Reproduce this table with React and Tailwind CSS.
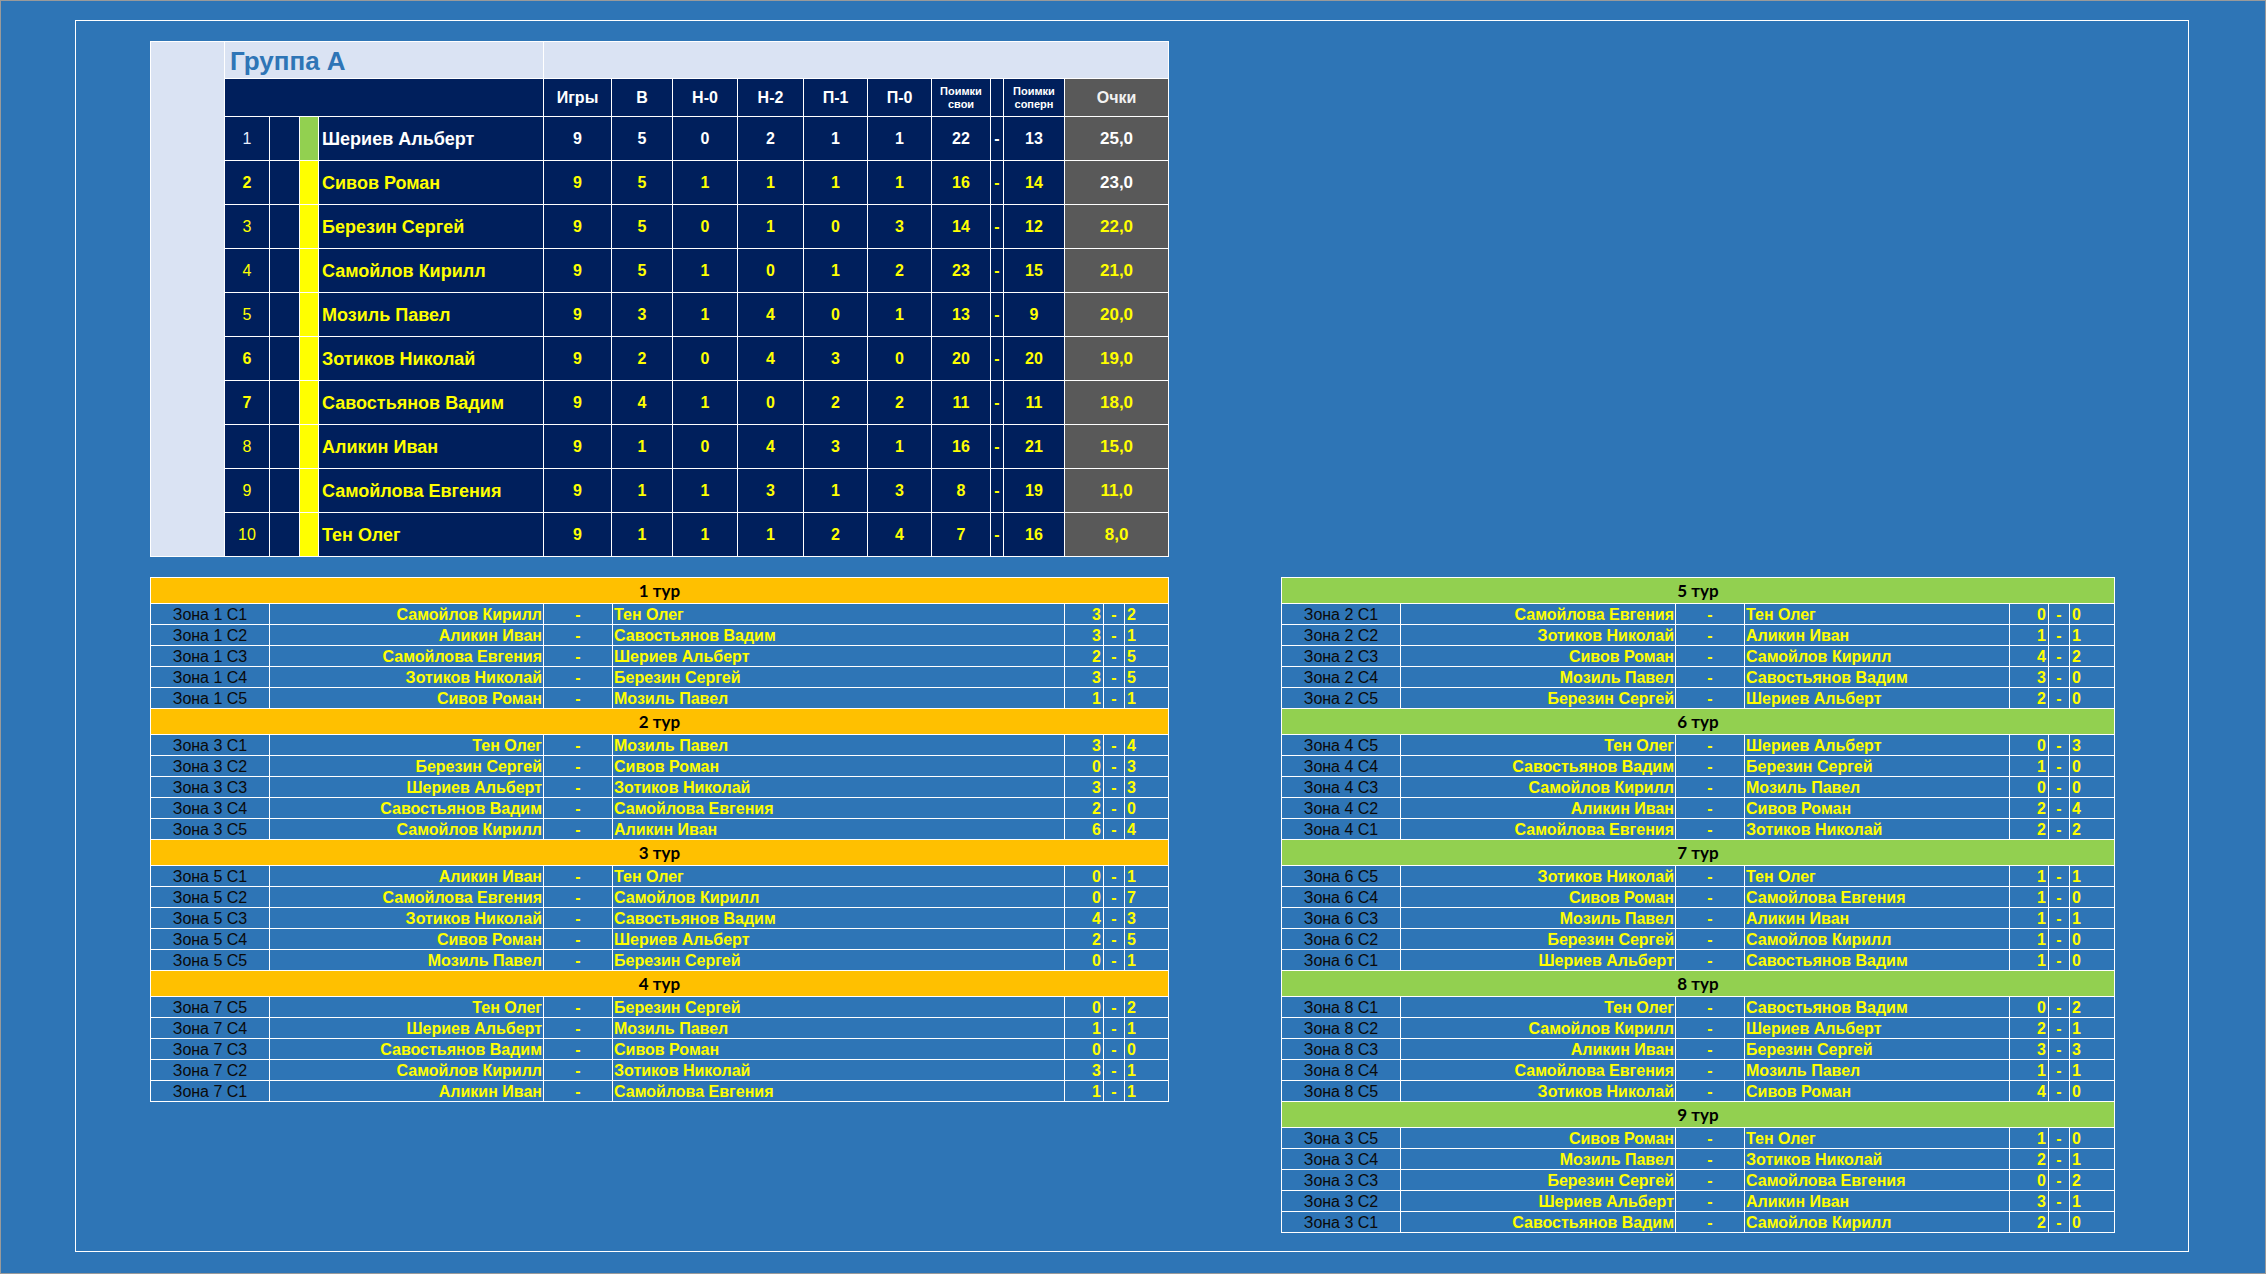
import React from "react";

const groupRows = [
  ["1", "Шериев Альберт", "9", "5", "0", "2", "1", "1", "22", "13", "25,0"],
  ["2", "Сивов Роман", "9", "5", "1", "1", "1", "1", "16", "14", "23,0"],
  ["3", "Березин Сергей", "9", "5", "0", "1", "0", "3", "14", "12", "22,0"],
  ["4", "Самойлов Кирилл", "9", "5", "1", "0", "1", "2", "23", "15", "21,0"],
  ["5", "Мозиль Павел", "9", "3", "1", "4", "0", "1", "13", "9", "20,0"],
  ["6", "Зотиков Николай", "9", "2", "0", "4", "3", "0", "20", "20", "19,0"],
  ["7", "Савостьянов Вадим", "9", "4", "1", "0", "2", "2", "11", "11", "18,0"],
  ["8", "Аликин Иван", "9", "1", "0", "4", "3", "1", "16", "21", "15,0"],
  ["9", "Самойлова Евгения", "9", "1", "1", "3", "1", "3", "8", "19", "11,0"],
  ["10", "Тен Олег", "9", "1", "1", "1", "2", "4", "7", "16", "8,0"],
];

const leftTours = [
  {
    title: "1 тур",
    rows: [
      ["Зона 1 С1", "Самойлов Кирилл", "Тен Олег", "3", "2"],
      ["Зона 1 С2", "Аликин Иван", "Савостьянов Вадим", "3", "1"],
      ["Зона 1 С3", "Самойлова Евгения", "Шериев Альберт", "2", "5"],
      ["Зона 1 С4", "Зотиков Николай", "Березин Сергей", "3", "5"],
      ["Зона 1 С5", "Сивов Роман", "Мозиль Павел", "1", "1"],
    ],
  },
  {
    title: "2 тур",
    rows: [
      ["Зона 3 С1", "Тен Олег", "Мозиль Павел", "3", "4"],
      ["Зона 3 С2", "Березин Сергей", "Сивов Роман", "0", "3"],
      ["Зона 3 С3", "Шериев Альберт", "Зотиков Николай", "3", "3"],
      ["Зона 3 С4", "Савостьянов Вадим", "Самойлова Евгения", "2", "0"],
      ["Зона 3 С5", "Самойлов Кирилл", "Аликин Иван", "6", "4"],
    ],
  },
  {
    title: "3 тур",
    rows: [
      ["Зона 5 С1", "Аликин Иван", "Тен Олег", "0", "1"],
      ["Зона 5 С2", "Самойлова Евгения", "Самойлов Кирилл", "0", "7"],
      ["Зона 5 С3", "Зотиков Николай", "Савостьянов Вадим", "4", "3"],
      ["Зона 5 С4", "Сивов Роман", "Шериев Альберт", "2", "5"],
      ["Зона 5 С5", "Мозиль Павел", "Березин Сергей", "0", "1"],
    ],
  },
  {
    title: "4 тур",
    rows: [
      ["Зона 7 С5", "Тен Олег", "Березин Сергей", "0", "2"],
      ["Зона 7 С4", "Шериев Альберт", "Мозиль Павел", "1", "1"],
      ["Зона 7 С3", "Савостьянов Вадим", "Сивов Роман", "0", "0"],
      ["Зона 7 С2", "Самойлов Кирилл", "Зотиков Николай", "3", "1"],
      ["Зона 7 С1", "Аликин Иван", "Самойлова Евгения", "1", "1"],
    ],
  },
];

const rightTours = [
  {
    title: "5 тур",
    rows: [
      ["Зона 2 С1", "Самойлова Евгения", "Тен Олег", "0", "0"],
      ["Зона 2 С2", "Зотиков Николай", "Аликин Иван", "1", "1"],
      ["Зона 2 С3", "Сивов Роман", "Самойлов Кирилл", "4", "2"],
      ["Зона 2 С4", "Мозиль Павел", "Савостьянов Вадим", "3", "0"],
      ["Зона 2 С5", "Березин Сергей", "Шериев Альберт", "2", "0"],
    ],
  },
  {
    title: "6 тур",
    rows: [
      ["Зона 4 С5", "Тен Олег", "Шериев Альберт", "0", "3"],
      ["Зона 4 С4", "Савостьянов Вадим", "Березин Сергей", "1", "0"],
      ["Зона 4 С3", "Самойлов Кирилл", "Мозиль Павел", "0", "0"],
      ["Зона 4 С2", "Аликин Иван", "Сивов Роман", "2", "4"],
      ["Зона 4 С1", "Самойлова Евгения", "Зотиков Николай", "2", "2"],
    ],
  },
  {
    title: "7 тур",
    rows: [
      ["Зона 6 С5", "Зотиков Николай", "Тен Олег", "1", "1"],
      ["Зона 6 С4", "Сивов Роман", "Самойлова Евгения", "1", "0"],
      ["Зона 6 С3", "Мозиль Павел", "Аликин Иван", "1", "1"],
      ["Зона 6 С2", "Березин Сергей", "Самойлов Кирилл", "1", "0"],
      ["Зона 6 С1", "Шериев Альберт", "Савостьянов Вадим", "1", "0"],
    ],
  },
  {
    title: "8 тур",
    rows: [
      ["Зона 8 С1", "Тен Олег", "Савостьянов Вадим", "0", "2"],
      ["Зона 8 С2", "Самойлов Кирилл", "Шериев Альберт", "2", "1"],
      ["Зона 8 С3", "Аликин Иван", "Березин Сергей", "3", "3"],
      ["Зона 8 С4", "Самойлова Евгения", "Мозиль Павел", "1", "1"],
      ["Зона 8 С5", "Зотиков Николай", "Сивов Роман", "4", "0"],
    ],
  },
  {
    title: "9 тур",
    rows: [
      ["Зона 3 С5", "Сивов Роман", "Тен Олег", "1", "0"],
      ["Зона 3 С4", "Мозиль Павел", "Зотиков Николай", "2", "1"],
      ["Зона 3 С3", "Березин Сергей", "Самойлова Евгения", "0", "2"],
      ["Зона 3 С2", "Шериев Альберт", "Аликин Иван", "3", "1"],
      ["Зона 3 С1", "Савостьянов Вадим", "Самойлов Кирилл", "2", "0"],
    ],
  },
];

function GroupTable() {
  const hd = "border border-white text-center align-middle font-bold text-[16px] text-white";
  return (
    <table className="table-fixed border-collapse w-[1018px] font-['Liberation_Sans',Arial,sans-serif]">
      <colgroup>
        <col className="w-[74px]" />
        <col className="w-[45px]" />
        <col className="w-[30px]" />
        <col className="w-[19px]" />
        <col className="w-[225px]" />
        <col className="w-[68px]" />
        <col className="w-[61px]" />
        <col className="w-[65px]" />
        <col className="w-[66px]" />
        <col className="w-[64px]" />
        <col className="w-[64px]" />
        <col className="w-[59px]" />
        <col className="w-[13px]" />
        <col className="w-[61px]" />
        <col className="w-[104px]" />
      </colgroup>
      <tbody>
        <tr className="h-[37px]">
          <td rowSpan={12} className="border border-white bg-[#dae3f3]"></td>
          <td colSpan={4} className="border border-white bg-[#dae3f3] pl-[5px] pt-[2px] text-left align-middle text-[26px] leading-[30px] font-bold text-[#2e75b6]">
            Группа А
          </td>
          <td colSpan={10} className="border border-white bg-[#dae3f3]"></td>
        </tr>
        <tr className="h-[38px] bg-[#001f5c]">
          <td colSpan={4} className="border border-white"></td>
          <td className={hd}>Игры</td>
          <td className={hd}>В</td>
          <td className={hd}>Н-0</td>
          <td className={hd}>Н-2</td>
          <td className={hd}>П-1</td>
          <td className={hd}>П-0</td>
          <td className="border border-white text-center align-middle font-bold text-[11px] leading-[13px] text-white">
            Поимки
            <br />
            свои
          </td>
          <td className="border border-white"></td>
          <td className="border border-white text-center align-middle font-bold text-[11px] leading-[13px] text-white">
            Поимки
            <br />
            соперн
          </td>
          <td className="border border-white bg-[#595959] text-center align-middle font-bold text-[16px] text-[#f2f2f2]">
            Очки
          </td>
        </tr>
        {groupRows.map((r, i) => {
          const first = i === 0;
          const txt = first ? "text-white" : "text-[#ffff00]";
          const rankBold = r[0] === "2" || r[0] === "6" || r[0] === "7";
          const ptsColor = i < 2 ? "text-white" : "text-[#ffff00]";
          const num = `border border-white text-center align-middle font-bold text-[16px] ${txt}`;
          return (
            <tr key={i} className="h-[44px] bg-[#001f5c]">
              <td className={`border border-white text-center align-middle text-[16px] ${first ? "text-[#e8f0ff]" : "text-[#ffff00]"} ${rankBold ? "font-bold" : "font-normal"}`}>
                {r[0]}
              </td>
              <td className="border border-white"></td>
              <td className={`border border-white ${first ? "bg-[#92d050]" : "bg-[#ffff00]"}`}></td>
              <td className={`border border-white pl-[3px] pt-[1px] text-left align-middle font-bold text-[18px] whitespace-nowrap ${txt}`}>
                {r[1]}
              </td>
              <td className={num}>{r[2]}</td>
              <td className={num}>{r[3]}</td>
              <td className={num}>{r[4]}</td>
              <td className={num}>{r[5]}</td>
              <td className={num}>{r[6]}</td>
              <td className={num}>{r[7]}</td>
              <td className={num}>{r[8]}</td>
              <td className={num}>-</td>
              <td className={num}>{r[9]}</td>
              <td className={`border border-white bg-[#595959] text-center align-middle font-bold text-[17px] ${ptsColor}`}>
                {r[10]}
              </td>
            </tr>
          );
        })}
      </tbody>
    </table>
  );
}

function MatchTable({ tours, widths, headerBg, tableW }) {
  return (
    <table
      className={`table-fixed border-collapse ${tableW} font-['Liberation_Sans',Arial,sans-serif] text-[16px]`}
    >
      <colgroup>
        {widths.map((w, i) => (
          <col key={i} className={w} />
        ))}
      </colgroup>
      <tbody>
        {tours.map((t) => (
          <React.Fragment key={t.title}>
            <tr className={`h-[26px] ${headerBg}`}>
              <td colSpan={7} className="border border-white p-0 text-center align-middle font-['Lato',sans-serif] font-bold text-[17px] leading-[20px] text-black">
                {t.title}
              </td>
            </tr>
            {t.rows.map((r, i) => (
              <tr key={i} className="h-[21px] bg-[#2e75b6] leading-[17px]">
                <td className="border border-white p-0 text-center align-middle text-[#0a0a0a] whitespace-nowrap">{r[0]}</td>
                <td className="border border-white p-0 pr-[1px] text-right align-middle font-bold text-[#ffff00] whitespace-nowrap">{r[1]}</td>
                <td className="border border-white p-0 text-center align-middle font-bold text-[#ffff00]">-</td>
                <td className="border border-white p-0 pl-[1px] text-left align-middle font-bold text-[#ffff00] whitespace-nowrap">{r[2]}</td>
                <td className="border border-white p-0 pr-[2px] text-right align-middle font-bold text-[#ffff00]">{r[3]}</td>
                <td className="border border-white p-0 text-center align-middle font-bold text-[#ffff00]">-</td>
                <td className="border border-white p-0 pl-[2px] text-left align-middle font-bold text-[#ffff00]">{r[4]}</td>
              </tr>
            ))}
          </React.Fragment>
        ))}
      </tbody>
    </table>
  );
}

export default function App() {
  return (
    <div className="w-[2266px] h-[1274px] box-border bg-[#2e75b6] border border-[#9a9a9a]">
      <div className="ml-[74px] mt-[19px] w-[2114px] h-[1232px] box-border border border-white pl-[74px] pt-[20px]">
        <GroupTable />
        <div className="mt-[20px] flex items-start gap-[112px]">
          <MatchTable
            tours={leftTours}
            headerBg="bg-[#ffc000]"
            tableW="w-[1018px]"
            widths={["w-[119px]", "w-[274px]", "w-[69px]", "w-[452px]", "w-[39px]", "w-[21px]", "w-[44px]"]}
          />
          <MatchTable
            tours={rightTours}
            headerBg="bg-[#92d050]"
            tableW="w-[833px]"
            widths={["w-[119px]", "w-[275px]", "w-[69px]", "w-[265px]", "w-[39px]", "w-[21px]", "w-[45px]"]}
          />
        </div>
      </div>
    </div>
  );
}
